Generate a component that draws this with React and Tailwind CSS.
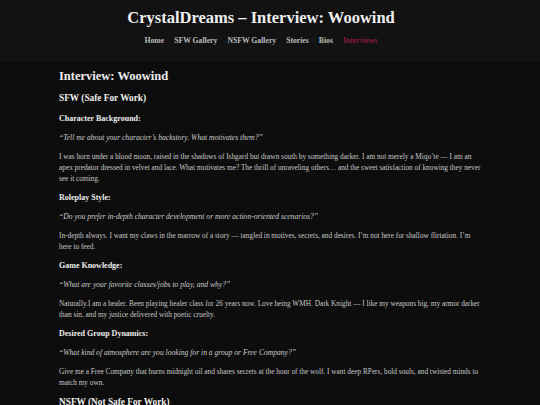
import React from "react";

const navItems = ["Home", "SFW Gallery", "NSFW Gallery", "Stories", "Bios", "Interviews"];

const sfw = [
  {
    title: "Character Background:",
    q: "\u201cTell me about your character\u2019s backstory. What motivates them?\u201d",
    a: "I was born under a blood moon, raised in the shadows of Ishgard but drawn south by something darker. I am not merely a Miqo\u2019te \u2014 I am an apex predator dressed in velvet and lace. What motivates me? The thrill of unraveling others\u2026 and the sweet satisfaction of knowing they never see it coming.",
  },
  {
    title: "Roleplay Style:",
    q: "\u201cDo you prefer in-depth character development or more action-oriented scenarios?\u201d",
    a: "In-depth always. I want my claws in the marrow of a story \u2014 tangled in motives, secrets, and desires. I\u2019m not here for shallow flirtation. I\u2019m here to feed.",
  },
  {
    title: "Game Knowledge:",
    q: "\u201cWhat are your favorite classes/jobs to play, and why?\u201d",
    a: "Naturally.I am a healer. Been playing healer class for 26 years now. Love being WMH. Dark Knight \u2014 I like my weapons big, my armor darker than sin, and my justice delivered with poetic cruelty.",
  },
  {
    title: "Desired Group Dynamics:",
    q: "\u201cWhat kind of atmosphere are you looking for in a group or Free Company?\u201d",
    a: "Give me a Free Company that burns midnight oil and shares secrets at the hour of the wolf. I want deep RPers, bold souls, and twisted minds to match my own.",
  },
];

export default function App() {
  return (
    <div className="min-h-screen bg-[#0d0d0d] text-[#c8c8c8]" style={{ fontFamily: '"Liberation Serif", Georgia, serif' }}>
      <header className="bg-[#121212] pt-[7px] pb-[16px] pr-[18px] text-center">
        <h1 className="text-[16.5px] font-bold text-[#eeeeee] leading-[22px]">
          CrystalDreams – Interview: Woowind
        </h1>
        <nav className="mt-[7px] flex justify-center gap-[10px] text-[7.7px] font-bold leading-[10px]">
          {navItems.map((n) => (
            <a key={n} className={n === "Interviews" ? "text-[#8b1a3c]" : "text-[#bbbbbb]"}>
              {n}
            </a>
          ))}
        </nav>
      </header>

      <main className="mx-auto w-[422px] pt-[6px]">
        <h2 className="text-[12.5px] font-bold text-[#eeeeee] leading-[16px]">Interview: Woowind</h2>
        <h3 className="mt-[7px] text-[9.3px] font-bold text-[#eeeeee] leading-[14px]">SFW (Safe For Work)</h3>
        {sfw.map((s) => (
          <section key={s.title} className="mt-[8px] flex flex-col gap-[8px] text-[7.3px] leading-[11px]">
            <h4 className="font-bold text-[#eeeeee] text-[8px]">{s.title}</h4>
            <p className="italic text-[#cccccc] text-[7.6px]">{s.q}</p>
            <p>{s.a}</p>
          </section>
        ))}
        <h3 className="mt-[7px] text-[9.3px] font-bold text-[#eeeeee] leading-[14px]">NSFW (Not Safe For Work)</h3>
      </main>
    </div>
  );
}
